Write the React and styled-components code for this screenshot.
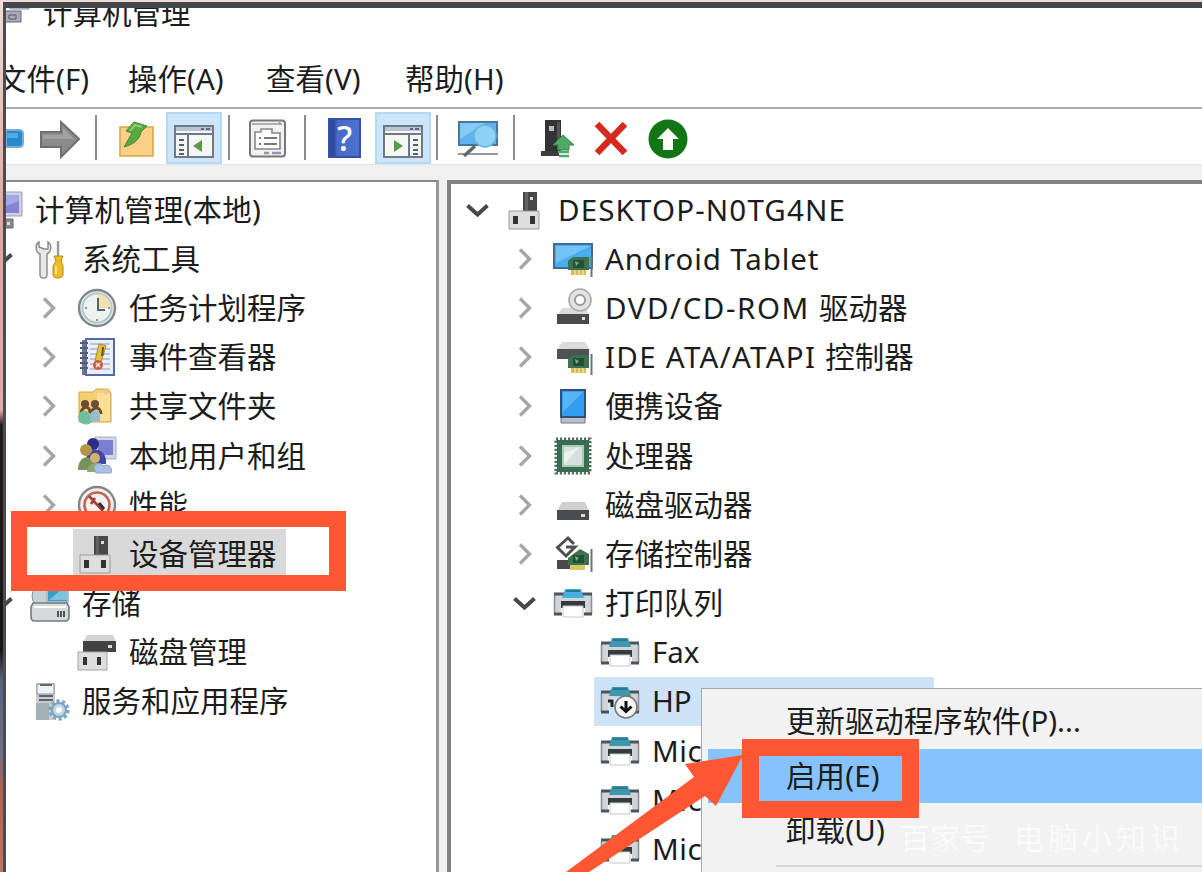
// App.jsx
import React from "react";
import styled, { createGlobalStyle } from "styled-components";

const accent = "#ff5733";

const GlobalStyle = createGlobalStyle`
  * {
    box-sizing: border-box;
  }

  body {
    margin: 0;
    overflow: hidden;
    font-family: "Noto Sans", "Noto Sans CJK SC", sans-serif;
    color: #1c1c1c;
  }
`;

/* ---------- icons ---------- */

const Icon = ({ w = 40, h = 40, children }) => (
  <svg width={w} height={h} viewBox={`0 0 ${w} ${h}`} fill="none">
    {children}
  </svg>
);

const ComputerIcon = () => (
  <Icon>
    <path d="M8 2h31v24H8z" fill="#cfd0e6" stroke="#9fa0bb" />
    <path d="M12 5h24v18H12z" fill="#8385d3" />
    <path d="M12 5h24v6L12 20z" fill="#a5a8e6" />
    <path d="M12 29h18v9H12z" fill="#888" stroke="#666" />
    <path d="M24 32h3v3h-3z" fill="#ddd" />
  </Icon>
);

const TitleIcon = () => (
  <Icon>
    <path d="M10 4h19v12H10z" fill="#cdd0ee" stroke="#8789aa" />
    <path d="M4 18h17v11H4z" fill="#a9a9b8" stroke="#666676" />
    <path d="M9 22h7v4H9z" stroke="#555566" />
  </Icon>
);

const ToolsIcon = () => (
  <Icon>
    <path
      d="M9 3C5 5 5 13 10 15v21c0 4 7 4 7 0V15c5-3 5-9 1-12v7h-4L9 8z"
      fill="#e8e8e8"
      stroke="#888"
      strokeWidth="1.4"
    />
    <path d="M28 2v15" stroke="#999" strokeWidth="2.4" />
    <path d="M24 17h9l-2 5 2 5v9c0 4-10 4-10 0v-9l3-5z" fill="#efbd28" stroke="#ba8a12" />
    <path d="M26 27v8" stroke="#ffe789" strokeWidth="2" />
  </Icon>
);

const ClockIcon = () => (
  <Icon>
    <circle cx="20" cy="20" r="18" fill="#dbe9f0" stroke="#858585" strokeWidth="2.4" />
    <circle cx="20" cy="20" r="14.5" fill="#edf2ee" stroke="#b4c7d1" strokeWidth="2" />
    <path d="M21 20V6a14 14 0 0 1 13 14z" fill="#f2e1b0" />
    <path d="M21 10v12h7" stroke="#56646d" strokeWidth="2" />
    <path d="M8 20h2M20 31v2M31 20h2" stroke="#7f98a8" strokeWidth="2" />
  </Icon>
);

const EventIcon = () => (
  <Icon>
    <path d="M5 3h10v35H5z" fill="#68769b" />
    <path d="M9 2h28v36H9z" fill="#eceef8" stroke="#5569a3" strokeWidth="2" />
    <path
      d="M13 7h20M13 12h20M13 17h20M13 22h20M13 27h20M13 32h20"
      stroke="#aab4d5"
      strokeWidth="1.6"
    />
    <path d="M3 6h8M3 11h8M3 16h8M3 21h8M3 26h8M3 31h8" stroke="#555b72" strokeWidth="1.8" />
    <path d="M22 7l7 2-5 16-6-1z" fill="#e6c13c" stroke="#a68c2b" />
    <circle cx="21" cy="28" r="5" fill="#d15b41" />
    <path d="M19 26l4 4m0-4l-4 4" stroke="#fff" strokeWidth="1.2" />
    <path d="M26 10l-1 9" stroke="#684f23" strokeWidth="2" />
  </Icon>
);

const ShareIcon = () => (
  <Icon>
    <path d="M2 6h14l3-3h12l3 4v29H2z" fill="#f3cf73" stroke="#d6a43e" />
    <path d="M20 7h13v28H20z" fill="#f9df98" />
    <path d="M27 3h4v5h-4z" fill="#eec3a0" />
    <circle cx="8" cy="18" r="4" fill="#6b4b35" />
    <circle cx="18" cy="18" r="4" fill="#704b35" />
    <path d="M4 27c2-8 9-7 9 0M14 28c2-9 10-7 10 0" stroke="#6a4a31" strokeWidth="3" />
    <path d="M1 30c3-8 11-6 12 0l3 5c-3 4-10 5-14 0z" fill="#72bd9c" />
    <path d="M13 29c2-6 8-6 10-1v7H13z" fill="#92bed0" />
  </Icon>
);

const UsersIcon = () => (
  <Icon>
    <path d="M18 1h21v22H18z" fill="#d2d5e7" stroke="#aaaec7" />
    <path d="M21 4h15v15H21z" fill="#7a80cf" />
    <circle cx="16" cy="8" r="6" fill="#2d2c8a" />
    <path d="M9 24c1-14 18-14 20 0v4H11z" fill="#4146a4" />
    <circle cx="9" cy="14" r="6" fill="#b4974b" />
    <path d="M1 34c0-17 17-17 17 0z" fill="#77905d" />
    <circle cx="18" cy="22" r="5" fill="#d2b568" />
    <path d="M10 36c1-12 15-12 17 0z" fill="#8ea76e" />
    <path d="M17 32c1-6 7-6 9-2 6-3 10 2 8 7H19z" fill="#a9c2e3" stroke="#8ca3c5" />
  </Icon>
);

const PerfIcon = () => (
  <Icon>
    <circle cx="20" cy="20" r="18" fill="#eee" stroke="#858585" strokeWidth="2.4" />
    <circle cx="20" cy="20" r="12.5" fill="#faf0ee" stroke="#c06354" strokeWidth="2.6" />
    <path d="M12 11l14 15M14 19l4-6" stroke="#a43e32" strokeWidth="2.6" />
    <path d="M22 18l5 6" stroke="#333" strokeWidth="3" />
  </Icon>
);

const DeviceIcon = () => (
  <Icon>
    <path d="M17 2h14v20H17z" fill="#484848" />
    <path d="M19 2h3v18h-3z" fill="#626262" />
    <path d="M24 7h3v3h-3z" fill="#ddd" />
    <path d="M3 21h30v18H3z" fill="#dedede" stroke="#999" />
    <path d="M7 26h5v8H7zM24 26h5v8h-5z" fill="#333" />
  </Icon>
);

const StorageIcon = () => (
  <Icon>
    <circle cx="14" cy="13" r="12" fill="#c7d0d3" stroke="#849095" />
    <path d="M17 5h21v14H17z" fill="#3d9cc5" stroke="#b3bcc4" strokeWidth="2" />
    <path d="M19 17L32 6h5v11z" fill="#7bc3df" />
    <path d="M3 20h34l2 4v10c0 3-2 4-4 4H5c-3 0-4-2-4-4V24z" fill="#d5dadd" stroke="#737b80" strokeWidth="1.6" />
    <path d="M4 24h32" stroke="#fff" strokeWidth="2" />
    <path d="M28 28v6M31 28v6M34 28v6" stroke="#454545" strokeWidth="1.8" />
  </Icon>
);

const DiskMgmtIcon = () => (
  <Icon>
    <path d="M10 3h26l3 7H6z" fill="#d3d3d3" />
    <path d="M6 9h33v11H6z" fill="#424242" />
    <path d="M31 13h4v3h-4z" fill="#ddd" />
    <path d="M1 20h29v18H1z" fill="#dedede" stroke="#a4a4a4" />
    <path d="M6 25h4v8H6zM20 25h4v8h-4z" fill="#333" />
  </Icon>
);

const ServicesIcon = () => (
  <Icon>
    <path d="M6 2h19v37H6z" fill="#c7cdd2" />
    <path d="M7 3h17v10H7z" fill="#f0f3f4" stroke="#8c9499" />
    <path d="M10 4h12M9 15h14M9 19h14" stroke="#5f686d" strokeWidth="2" />
    <path d="M6 22h13v17H6z" fill="#a5b0b7" />
    <circle cx="29" cy="29" r="9" stroke="#82a5c1" strokeWidth="3.4" strokeDasharray="3.2 2.45" />
    <circle cx="29" cy="29" r="7" fill="#bcd6ea" stroke="#7ea2bf" strokeWidth="2" />
    <circle cx="29" cy="29" r="3" fill="#fff" />
  </Icon>
);

// small green expansion card drawn over several icons
const Card = () => (
  <>
    <path d="M15 22l5-4h16v13H15z" fill="#3d7050" />
    <path d="M20 21h11v8H20z" fill="#234f32" />
    <path d="M22 22l4 2-3 3z" fill="#76b184" />
    <path d="M18 31h15v5H18z" fill="#d8b957" />
    <path d="M22 31v5M26 31v5M30 31v5" stroke="#fff1b6" />
    <path d="M38.5 17v21" stroke="#6b747a" strokeWidth="2" />
  </>
);

const TabletIcon = () => (
  <Icon>
    <path d="M1 5h38v24H1z" fill="#47aef2" stroke="#406c8e" strokeWidth="2" />
    <path d="M3 7h35L3 24z" fill="#72c3f6" />
    <Card />
  </Icon>
);

const DvdIcon = () => (
  <Icon>
    <path d="M9 20h24l4 9H4z" fill="#dadada" />
    <circle cx="27" cy="12" r="11" fill="#e3e3e3" stroke="#aaa" strokeWidth="1.6" />
    <circle cx="27" cy="12" r="5" stroke="#9a9a9a" strokeWidth="2" fill="#fff" />
    <path d="M4 26h32v10H4z" fill="#4a4a4a" />
    <path d="M29 29h3v3h-3z" fill="#ddd" />
  </Icon>
);

const IdeIcon = () => (
  <Icon>
    <path d="M9 5h23l5 8H4z" fill="#dadada" />
    <path d="M4 12h32v10H4z" fill="#4c5356" />
    <Card />
  </Icon>
);

const PortableIcon = () => (
  <Icon>
    <path d="M8 4h24v33H8z" fill="#b6c0cc" stroke="#6e7780" />
    <path d="M8 4h24v27H8z" fill="#2f9df2" stroke="#34506a" strokeWidth="2" />
    <path d="M10 6h20L10 26z" fill="#58b4f7" />
  </Icon>
);

const CpuIcon = () => (
  <Icon>
    <path d="M3 3h34v34H3z" stroke="#4f6e5b" strokeWidth="3" strokeDasharray="2.2 1.8" />
    <path d="M4 4h32v32H4z" fill="#3c6b54" />
    <path d="M10 10h20v20H10z" fill="#d7e1db" stroke="#a8cbb7" strokeWidth="2" />
    <path d="M11 29V17l15-6z" fill="#eef2ef" />
  </Icon>
);

const DiskIcon = () => (
  <Icon>
    <path d="M9 17h23l4 9H4z" fill="#cfcfcf" />
    <path d="M4 25h32v10H4z" fill="#484c4f" />
    <path d="M28 29h4v3h-4z" fill="#ddd" />
  </Icon>
);

const StorageCtlIcon = () => (
  <Icon>
    <path d="M4 26h14v9H4z" fill="#4a4a4a" />
    <path d="M21 10l-6-6L4.500 13.500l8.500 8.500 5-5 4-4h-9" stroke="#505050" strokeWidth="3" />
    <path d="M15 24l12-9 9 5v11H15z" fill="#3d7050" />
    <path d="M20 21h11v8H20z" fill="#234f32" />
    <path d="M22 22l4 2-3 3z" fill="#76b184" />
    <path d="M17 31h15v5H17z" fill="#d8c95f" />
    <path d="M38.5 15v23" stroke="#6b747a" strokeWidth="2" />
  </Icon>
);

const PrinterIcon = ({ tone = "#3f97ae", disabled }) => (
  <Icon>
    <path d="M1 10h38v22h-7V20H8v12H1z" fill="#d0d5d8" />
    <path d="M1.500 12v19M38.500 12v19" stroke="#8b9398" strokeWidth="1.6" />
    <path d="M1 31h8M31 31h8" stroke="#4d5559" strokeWidth="3" />
    <path d="M1 11h10M29 11h10" stroke="#4d5559" strokeWidth="3" />
    <path d="M12 6h16l3 9H9z" fill={tone} />
    <path d="M13 8h14" stroke="#277a94" strokeWidth="2" />
    {disabled ? (
      <>
        <path d="M10 17h24v16H10z" fill="#cce3f8" />
        <path d="M8 20h4v6" stroke="#222" strokeWidth="3" />
        <circle cx="26" cy="26" r="11" fill="#f5f5f5" stroke="#777" strokeWidth="1.6" />
        <path d="M26 20v10M20.500 25.500l5.500 5 5.500-5" stroke="#111" strokeWidth="3" />
      </>
    ) : (
      <>
        <path d="M8 18h24v7H8z" fill="#343a3d" />
        <path d="M10 23h20v11H10z" fill="#fff" stroke="#c4c8ca" />
      </>
    )}
  </Icon>
);

const BackIcon = () => (
  <Icon w={18} h={40}>
    <path d="M0 11h13c3 0 4 1 4 4v9c0 3-1 4-4 4H0z" fill="#2a88cd" stroke="#7badd2" strokeWidth="2" />
    <path d="M0 14h12v5H0z" fill="#51a9e5" />
  </Icon>
);

const ForwardIcon = () => (
  <Icon>
    <path d="M1 13h20V3l18 17-18 18V28H1z" fill="#8b8b8b" stroke="#707070" strokeWidth="2" />
    <path d="M3 16h20V9l11 11H3z" fill="#a2a2a2" />
  </Icon>
);

const FolderUpIcon = () => (
  <Icon w={36}>
    <path d="M1 8h11l3 4h6l3-4h10v29H1z" fill="#fad086" stroke="#d9a647" strokeWidth="1.6" />
    <path d="M5 28l8-14-6-2 8-9 13 4-6 6c-1 8-9 13-17 15z" fill="#5aa840" stroke="#448b35" />
    <path d="M11 12l5-6 7 2" stroke="#92cc6c" strokeWidth="2" />
  </Icon>
);

const PaneIcon = ({ flip }) => (
  <Icon>
    <path d="M1 7h38v31H1z" fill="#f4f7f4" stroke="#6d7985" strokeWidth="2" />
    <path d="M2 8h36v4H2z" fill="#b9c3d2" />
    <path d="M2 15h36" stroke="#6d7985" strokeWidth="2" />
    <path d="M27 10h3M32 10h4" stroke="#6b6191" strokeWidth="2" />
    {flip ? (
      <>
        <path d="M26 16v21" stroke="#6d7985" strokeWidth="2" />
        <path d="M11 21l9 6-9 6z" fill="#5b9a4b" />
        <path d="M30 21h5M30 26h5M30 31h5M30 35h5" stroke="#51606b" strokeWidth="2" />
      </>
    ) : (
      <>
        <path d="M14 16v21" stroke="#6d7985" strokeWidth="2" />
        <path d="M28 21l-9 6 9 6z" fill="#5b9a4b" />
        <path d="M5 21h5M5 26h5M5 31h5M5 35h5" stroke="#51606b" strokeWidth="2" />
      </>
    )}
  </Icon>
);

const PropsIcon = () => (
  <Icon>
    <rect x="2" y="1.5" width="35" height="36" rx="3" fill="#f2f2f2" stroke="#777" strokeWidth="2" />
    <path d="M4 5h29M31 3l3 3" stroke="#9a9a9a" strokeWidth="1.4" />
    <path d="M7 13h6v-3h11v4h8v16H7z" fill="#fff" stroke="#868686" strokeWidth="1.6" />
    <path d="M11 19h2M11 25h2M16 19h13M16 25h13" stroke="#777" strokeWidth="2" />
    <path d="M16 34h5M24 34h9" stroke="#849bb0" strokeWidth="2.4" />
  </Icon>
);

const DisplayIcon = () => (
  <Icon w={42}>
    <path d="M2 3h38v23H2z" fill="#5cb3ee" stroke="#47789c" strokeWidth="2" />
    <path d="M3 4h25L3 20z" fill="#85caf5" />
    <path d="M1 35h40" stroke="#999" strokeWidth="2" />
    <path d="M18 27L7 37" stroke="#5d6b75" strokeWidth="3.6" />
    <circle cx="28" cy="17" r="11" fill="#8fd0f5" stroke="#6db3dc" strokeWidth="1.6" />
  </Icon>
);

const UpdateIcon = () => (
  <Icon w={34}>
    <path d="M4 1h16v31H4z" fill="#333" />
    <path d="M0 32h18v5H0z" fill="#3d3d3d" />
    <path d="M8 7h5v5H8z" fill="#bbb" />
    <path d="M16 3h3v27h-3z" fill="#555" />
    <path d="M22 16l11 10h-5v5H17v-5h-5z" fill="#4fa768" stroke="#378650" />
    <path d="M17 33h11M18 37h10" stroke="#4fa768" strokeWidth="2.4" />
  </Icon>
);

const RemoveIcon = () => (
  <Icon w={34}>
    <path d="M3 5l28 29M31 5L3 34" stroke="#d42a20" strokeWidth="6.5" />
  </Icon>
);

const EnableIcon = () => (
  <Icon>
    <circle cx="20" cy="20" r="19.5" fill="#127516" />
    <path d="M20 9L9 20h6v11h10V20h6z" fill="#fbfff5" />
  </Icon>
);

const Chevron = ({ open }) => (
  <svg width="24" height="24" viewBox="0 0 24 24" fill="none">
    {open ? (
      <path d="M1.500 7.500l10 9 10-9" stroke="#484848" strokeWidth="4" />
    ) : (
      <path d="M7 2.500l9.500 9.500L7 21.500" stroke="#a6a6a6" strokeWidth="3.400" />
    )}
  </svg>
);

/* ---------- data ---------- */

const consoleTree = [
  { level: 0, label: "计算机管理(本地)", icon: <ComputerIcon />, ls: 0.2 },
  { level: 1, label: "系统工具", icon: <ToolsIcon />, open: true },
  { level: 2, label: "任务计划程序", icon: <ClockIcon />, closed: true },
  { level: 2, label: "事件查看器", icon: <EventIcon />, closed: true },
  { level: 2, label: "共享文件夹", icon: <ShareIcon />, closed: true },
  { level: 2, label: "本地用户和组", icon: <UsersIcon />, closed: true },
  { level: 2, label: "性能", icon: <PerfIcon />, closed: true },
  { level: 2, label: "设备管理器", icon: <DeviceIcon />, selected: true },
  { level: 1, label: "存储", icon: <StorageIcon />, open: true },
  { level: 2, label: "磁盘管理", icon: <DiskMgmtIcon /> },
  { level: 1, label: "服务和应用程序", icon: <ServicesIcon /> },
];

const deviceTree = [
  { level: 0, label: "DESKTOP-N0TG4NE", icon: <DeviceIcon />, open: true, ls: 1.15 },
  { level: 1, label: "Android Tablet", icon: <TabletIcon />, closed: true, ls: 0.9 },
  { level: 1, latin: "DVD/CD-ROM ", label: "驱动器", icon: <DvdIcon />, closed: true, ls: 1.55 },
  { level: 1, latin: "IDE ATA/ATAPI ", label: "控制器", icon: <IdeIcon />, closed: true, ls: 1.3 },
  { level: 1, label: "便携设备", icon: <PortableIcon />, closed: true },
  { level: 1, label: "处理器", icon: <CpuIcon />, closed: true },
  { level: 1, label: "磁盘驱动器", icon: <DiskIcon />, closed: true },
  { level: 1, label: "存储控制器", icon: <StorageCtlIcon />, closed: true },
  { level: 1, label: "打印队列", icon: <PrinterIcon tone="#49aee0" />, open: true },
  { level: 2, label: "Fax", icon: <PrinterIcon /> },
  { level: 2, label: "HP", icon: <PrinterIcon disabled />, highlighted: true },
  { level: 2, label: "Mic", icon: <PrinterIcon />, ls: 0.6 },
  { level: 2, label: "Mic", icon: <PrinterIcon />, ls: 0.6 },
  { level: 2, label: "Mic", icon: <PrinterIcon />, ls: 0.6 },
];

const Tree = ({ items, offset }) =>
  items.map((item, i) => (
    <TreeRow key={i} $indent={offset + item.level * 47}>
      <ChevronSlot>{(item.open || item.closed) && <Chevron open={item.open} />}</ChevronSlot>
      <TreeItem $selected={item.selected} $highlighted={item.highlighted}>
        {item.icon}
        {item.latin ? (
          <Label>
            <Spaced $ls={item.ls}>{item.latin}</Spaced>
            {item.label}
          </Label>
        ) : (
          <Label $ls={item.ls}>{item.label}</Label>
        )}
      </TreeItem>
    </TreeRow>
  ));

const App = () => {
  return (
    <>
      <GlobalStyle />
      <Desktop>
        <Window>
          <TitleBar>
            <TitleIcon />
            <Label>计算机管理</Label>
          </TitleBar>
          <MenuBar>
            <MenuName $w={131}>文件(F)</MenuName>
            <MenuName $w={138}>操作(A)</MenuName>
            <MenuName $w={139}>查看(V)</MenuName>
            <MenuName $w={120}>帮助(H)</MenuName>
          </MenuBar>
          <Toolbar>
            <Tool $w={18}><BackIcon /></Tool>
            <Tool $w={40} $gap={16}><ForwardIcon /></Tool>
            <Separator $gap={15} />
            <Tool $w={36} $gap={22}><FolderUpIcon /></Tool>
            <Tool $w={56} $gap={11} $active><PaneIcon /></Tool>
            <Separator $gap={6} />
            <Tool $w={40} $gap={18}><PropsIcon /></Tool>
            <Separator $gap={16} />
            <HelpButton>?</HelpButton>
            <Tool $w={56} $gap={15} $active><PaneIcon flip /></Tool>
            <Separator $gap={5} />
            <Tool $w={42} $gap={19}><DisplayIcon /></Tool>
            <Separator $gap={14} />
            <Tool $w={34} $gap={26}><UpdateIcon /></Tool>
            <Tool $w={34} $gap={19}><RemoveIcon /></Tool>
            <Tool $w={40} $gap={20}><EnableIcon /></Tool>
          </Toolbar>
          <Panes>
            <ConsolePane>
              <Tree items={consoleTree} offset={-63} />
            </ConsolePane>
            <DevicePane>
              <Tree items={deviceTree} offset={15} />
            </DevicePane>
          </Panes>
        </Window>

        <ContextMenu>
          <MenuItem $ls={0.05}>更新驱动程序软件(P)...</MenuItem>
          <MenuItem $active>启用(E)</MenuItem>
          <MenuItem>卸载(U)</MenuItem>
          <MenuDivider />
        </ContextMenu>
        <Watermark>
          <span>百家号</span>
          <span>电脑小知识</span>
        </Watermark>

        <DeviceMark />
        <EnableMark />
        <Pointer viewBox="0 0 180 122">
          <path d="M177 5L119 14l9 13L0 122h23L139 46l11 10z" fill={accent} />
        </Pointer>
      </Desktop>
    </>
  );
};

/* ---------- layout ---------- */

const Desktop = styled.div`
  position: relative;
  width: 1202px;
  height: 872px;
  padding: 2px 0 0 3px;
  overflow: hidden;
  background: linear-gradient(
    #f0dcd8 0,
    #dba79e 230px,
    #e3aca4 410px,
    #241c1c 425px,
    #171517 650px,
    #59617e 680px,
    #6c6f8a 750px,
    #b46050 790px,
    #c4735f 872px
  );
`;

const Window = styled.div`
  display: flex;
  flex-direction: column;
  height: 870px;
  border-top: 6px solid #45474a;
  border-left: 3px solid #4b4b50;
  background: #fff;
  overflow: hidden;
`;

const Label = styled.span`
  font-size: 29.5px;
  line-height: 40px;
  letter-spacing: ${({ $ls }) => $ls || 0}px;
  white-space: nowrap;
`;

const Spaced = styled.span`
  letter-spacing: ${({ $ls }) => $ls}px;
  white-space: pre;
`;

const TitleBar = styled.div`
  display: flex;
  flex: none;
  align-items: center;
  gap: 3px;
  height: 40px;
  margin: -15px 0 0 -6px;
`;

const MenuBar = styled.div`
  display: flex;
  flex: none;
  align-items: center;
  height: 74px;
  margin-left: -9px;
  padding-top: 17px;
`;

const MenuName = styled.div`
  width: ${({ $w }) => $w}px;
  font-size: 29.4px;
  letter-spacing: 0.1px;
  line-height: 40px;
  white-space: nowrap;
`;

const Toolbar = styled.div`
  display: flex;
  flex: none;
  align-items: center;
  height: 58px;
  padding-top: 2px;
  border-top: 2px solid #adadad;
  border-bottom: 1px solid #e2e2e2;
`;

const Tool = styled.div`
  display: flex;
  flex: none;
  align-items: center;
  justify-content: center;
  width: ${({ $w }) => $w}px;
  height: 52px;
  padding-top: 2px;
  margin-left: ${({ $gap }) => $gap || 0}px;
  border: ${({ $active }) => ($active ? "2px solid #b4d8f5" : "none")};
  background: ${({ $active }) => ($active ? "#cde5f9" : "transparent")};
`;

const Separator = styled.div`
  flex: none;
  width: 2px;
  height: 45px;
  margin-left: ${({ $gap }) => $gap}px;
  background: #8c8c8c;
`;

const HelpButton = styled.div`
  flex: none;
  width: 33px;
  height: 40px;
  margin-left: 22px;
  margin-right: -1px;
  border: 2px solid #3451a3;
  background: linear-gradient(90deg, #2f4ba0 0 15%, #4a6ac8 25%, #4d70d0);
  color: #fff;
  font-size: 34px;
  font-weight: 500;
  line-height: 36px;
  text-align: center;
`;

const Panes = styled.div`
  display: flex;
  flex: 1;
  gap: 8px;
  padding-top: 15px;
  min-height: 0;
  background: #f0f0f0;
`;

const ConsolePane = styled.div`
  flex: none;
  width: 433px;
  padding-top: 3px;
  border-top: 2px solid #8a8a8a;
  border-right: 3px solid #999;
  background: #fff;
  overflow: hidden;
`;

const DevicePane = styled.div`
  flex: 1;
  padding-top: 1px;
  border-top: 4px solid #828282;
  border-left: 4px solid #828282;
  background: #fff;
  overflow: hidden;
`;

const TreeRow = styled.div`
  display: flex;
  align-items: center;
  height: 49.200px;
  margin-left: ${({ $indent }) => $indent}px;
`;

const ChevronSlot = styled.div`
  display: flex;
  flex: none;
  width: 24px;
  margin-right: 10px;
`;

const TreeItem = styled.div`
  display: flex;
  flex: none;
  align-items: center;
  gap: 12px;
  height: 100%;
  width: ${({ $highlighted }) => ($highlighted ? "340px" : "auto")};
  margin-left: ${({ $selected }) => ($selected ? 2 : 0)}px;
  padding: 0 9px 0 ${({ $selected }) => ($selected ? 4 : 6)}px;
  background: ${({ $selected, $highlighted }) =>
    $selected ? "#d9d9d9" : $highlighted ? "#cce3f8" : "transparent"};
`;

/* ---------- overlays ---------- */

const ContextMenu = styled.div`
  position: absolute;
  top: 688px;
  left: 701px;
  right: -10px;
  bottom: -10px;
  padding: 5px 0 0 6px;
  border: 1px solid #a8a8a8;
  background: #f2f2f2;
`;

const MenuItem = styled.div`
  height: 54.500px;
  padding-left: 78px;
  font-size: 29.4px;
  line-height: 54px;
  letter-spacing: ${({ $ls }) => $ls || 0.2}px;
  background: ${({ $active }) => ($active ? "#86c2fd" : "transparent")};
`;

const MenuDivider = styled.div`
  height: 2px;
  margin: 7px 0 0 68px;
  background: #d4d4d4;
`;

const Watermark = styled.div`
  position: absolute;
  top: 818px;
  left: 900px;
  display: flex;
  gap: 24px;
  color: #fafafa;
  font-size: 30px;
  line-height: 40px;

  span + span {
    letter-spacing: 4px;
  }
`;

const Mark = styled.div`
  position: absolute;
  border: 16px solid ${accent};
`;

const DeviceMark = styled(Mark)`
  top: 511px;
  left: 11px;
  width: 335px;
  height: 80px;
  border-right-width: 17px;
`;

const EnableMark = styled(Mark)`
  top: 739px;
  left: 742px;
  width: 177px;
  height: 79px;
  border-width: 17px;
`;

const Pointer = styled.svg`
  position: absolute;
  top: 750px;
  left: 566px;
  width: 180px;
  height: 122px;
`;

export default App;
